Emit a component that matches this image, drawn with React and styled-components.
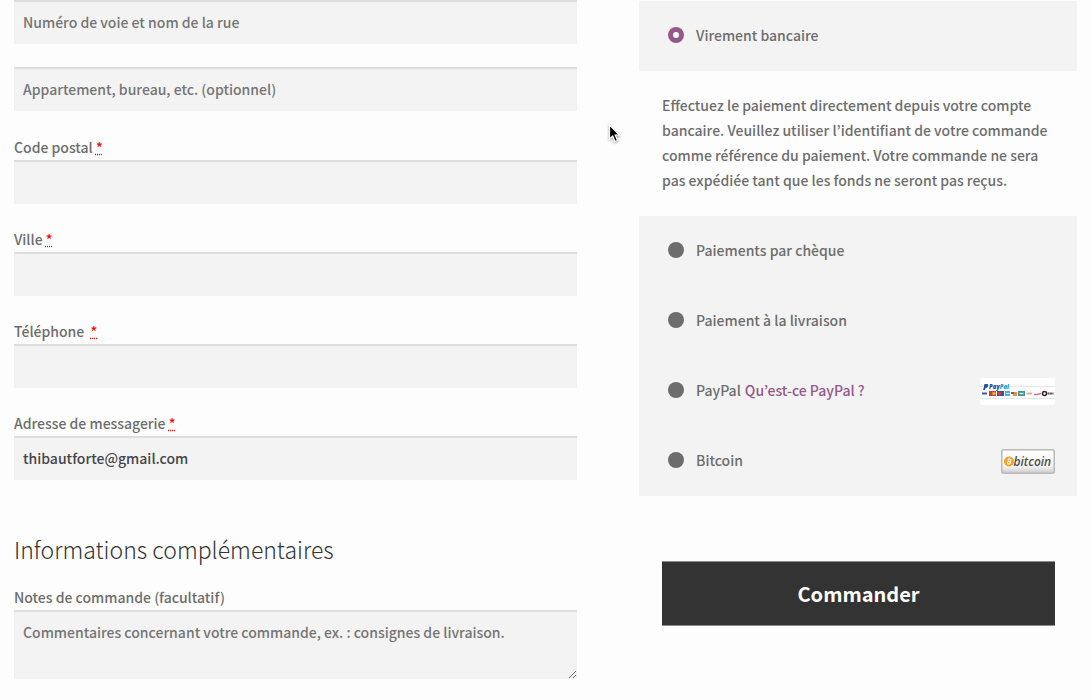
import React, { useState } from 'react';
import styled, { createGlobalStyle } from 'styled-components';

const GlobalStyle = createGlobalStyle`
  *, *::before, *::after {
    box-sizing: border-box;
  }

  body {
    margin: 0;
    background: #fdfdfd;
    color: #6d6d6d;
    font-family: 'Noto Sans CJK KR', 'Open Sans', sans-serif;
    font-size: 14px;
    font-weight: 500;
    line-height: 25px;
  }
`;

const Checkout = styled.form`
  display: grid;
  grid-template-columns: 9fr 7fr;
  column-gap: 62px;
  align-items: start;
  padding: 0 14px;
`;

const Column = styled.div`
  min-width: 0;
`;

const AddressLines = styled.div`
  display: grid;
  row-gap: 23px;
  margin-bottom: 24px;
`;

const Field = styled.p`
  margin: 0 0 23px;
`;

const Label = styled.label`
  display: block;
  white-space: pre-wrap;
`;

const Required = styled.abbr`
  color: #f00;
  text-decoration: underline dotted;
`;

const Input = styled.input`
  display: block;
  width: 100%;
  height: 44px;
  padding: 0 9px;
  border: 0;
  border-radius: 0;
  outline: 0;
  background: #f3f3f3;
  box-shadow: inset 0 2px 1px rgba(0, 0, 0, 0.09);
  color: #43454b;
  font: inherit;

  &::placeholder {
    color: #757575;
  }
`;

const Notes = styled(Input)`
  height: 69px;
  padding: 10px 9px;
  resize: vertical;
`;

const Heading = styled.h3`
  margin: 53px 0 20px;
  color: #333;
  font-size: 23px;
  font-weight: 300;
  line-height: 32px;
`;

const Methods = styled.ul`
  margin: 1px 0 0;
  padding: 0;
  list-style: none;
`;

const MethodRow = styled.div`
  display: flex;
  align-items: center;
  height: 70px;
  padding: 0 22px 2px 29px;
  background: #f3f3f3;
`;

const Radio = styled.input`
  appearance: none;
  flex: none;
  width: 16px;
  height: 16px;
  margin: 0 12px 0 0;
  border-radius: 50%;
  background: #6d6d6d;

  &:checked {
    border: 5px solid #96588a;
    background: #fdfdfd;
  }
`;

const MethodName = styled.label`
  margin-right: 4px;
`;

const HelpLink = styled.a`
  color: #96588a;
  text-decoration: none;
`;

const Logo = styled.span`
  display: flex;
  margin: 2px 0 0 auto;
`;

const Description = styled.p`
  margin: 0;
  padding: 22px 23px 23px;
`;

const Order = styled.button`
  display: block;
  width: calc(100% - 45px);
  height: 65px;
  margin: 65px 22px 0 23px;
  padding: 0;
  border: 0;
  border-top: 1px solid #8a8a8a;
  border-bottom: 1px solid #8a8a8a;
  background: #333;
  color: #fff;
  font: inherit;
  font-size: 20px;
  font-weight: 700;
`;

const Pointer = styled.svg`
  position: fixed;
  top: 123px;
  left: 606px;
  pointer-events: none;
`;

function PayPalLogo() {
  return (
    <svg width="75" height="27" viewBox="0 0 75 27" role="img" aria-label="PayPal">
      <rect width="75" height="27" rx="3" fill="#fff" />
      <path d="M0 8.5H3M24 8.5H75M0 20.5H75" stroke="#e6e6e6" />
      <path d="M4.5 6H7.5Q9 6.5 8 8.5Q7 10 5.5 10L5 12H3.2Z" fill="#1f4f96" />
      <text x="9" y="11" fontFamily="Open Sans" fontSize="6" fontWeight="800" fontStyle="italic" fill="#1f4796">
        Pay<tspan fill="#269bd7">Pal</tspan>
      </text>
      <path d="M2 14H7V17H2Z" fill="#dfe6f3" />
      <path d="M2 15.5H7" stroke="#35569b" strokeWidth="1.8" />
      <path d="M9 13H16V18H9Z" fill="#c5452c" />
      <circle cx="14" cy="15.5" r="1.8" fill="#eca63b" />
      <path d="M17 13H24V18H17Z" fill="#24599c" />
      <circle cx="19.5" cy="15.5" r="1.8" fill="#dd3844" />
      <path d="M25 13H30V18H25Z" fill="#4aaddd" />
      <path d="M26 15.5H29.5" stroke="#d4effb" />
      <path d="M31 15H34" stroke="#555" strokeWidth="1.8" />
      <path d="M34 15H37M33 17H37" stroke="#ef8b45" strokeWidth="1.8" />
      <path d="M38 13H45V18H38Z" fill="#41939c" />
      <path d="M39.5 15.5H43.5" stroke="#d3eecb" strokeWidth="1.5" />
      <path d="M46.5 15.5H52" stroke="#f1a189" strokeWidth="1.8" />
      <path d="M54 16.5H57L61 15.5" fill="none" stroke="#cf718e" strokeWidth="1.4" />
      <circle cx="64.5" cy="15.5" r="2" fill="#fff" stroke="#292929" strokeWidth="1.5" />
      <path d="M67.5 15.5H73.5" stroke="#555" strokeWidth="1.8" strokeDasharray="2 0.4" />
    </svg>
  );
}

function BitcoinLogo() {
  return (
    <svg width="54" height="25" viewBox="0 0 54 25" role="img" aria-label="Bitcoin">
      <defs>
        <linearGradient id="badge" x2="0" y2="1">
          <stop offset="0" stopColor="#fff" />
          <stop offset="0.7" stopColor="#f4f4f4" />
          <stop offset="1" stopColor="#c9c9c9" />
        </linearGradient>
      </defs>
      <rect x="0.75" y="0.75" width="52.5" height="23.5" rx="2" fill="url(#badge)" stroke="#b9b9b9" strokeWidth="1.5" />
      <circle cx="8" cy="12.5" r="5" fill="#f8a11b" />
      <path
        d="M7 9.8V15.2M7 10H8.3Q9.8 10 9.6 11.2Q9.5 12.4 8 12.4H7H8.3Q9.9 12.5 9.7 13.8Q9.5 15 8 15H7"
        transform="rotate(12 8 12.5)"
        fill="none"
        stroke="#fff"
        strokeWidth="1"
      />
      <text x="12.5" y="17" fontFamily="Open Sans" fontSize="12" fontWeight="600" fontStyle="italic" fill="#4d4d4d">bitcoin</text>
    </svg>
  );
}

const fields = [
  { id: 'postcode', label: 'Code postal ', type: 'text' },
  { id: 'city', label: 'Ville ', type: 'text' },
  { id: 'phone', label: 'Téléphone  ', type: 'tel' },
  { id: 'email', label: 'Adresse de messagerie ', type: 'email', value: 'thibautforte@gmail.com' },
];

const methods = [
  {
    id: 'bacs',
    name: 'Virement bancaire',
    description:
      'Effectuez le paiement directement depuis votre compte bancaire. Veuillez utiliser l’identifiant de votre commande comme référence du paiement. Votre commande ne sera pas expédiée tant que les fonds ne seront pas reçus.',
  },
  { id: 'cheque', name: 'Paiements par chèque' },
  { id: 'cod', name: 'Paiement à la livraison' },
  { id: 'paypal', name: 'PayPal', help: 'Qu’est-ce PayPal ?', logo: <PayPalLogo /> },
  { id: 'bitcoin', name: 'Bitcoin', logo: <BitcoinLogo /> },
];

export default function App() {
  const [selected, setSelected] = useState('bacs');

  return (
    <>
      <GlobalStyle />
      <Checkout onSubmit={e => e.preventDefault()}>
        <Column>
          <AddressLines>
            <Input aria-label="Adresse" placeholder="Numéro de voie et nom de la rue" />
            <Input aria-label="Complément d’adresse" placeholder="Appartement, bureau, etc. (optionnel)" />
          </AddressLines>
          {fields.map(field => (
            <Field key={field.id}>
              <Label htmlFor={field.id}>
                {field.label}
                <Required>*</Required>
              </Label>
              <Input id={field.id} type={field.type} defaultValue={field.value} />
            </Field>
          ))}
          <Heading>Informations complémentaires</Heading>
          <Label htmlFor="notes">Notes de commande (facultatif)</Label>
          <Notes
            as="textarea"
            id="notes"
            placeholder="Commentaires concernant votre commande, ex. : consignes de livraison."
          />
        </Column>
        <Column>
          <Methods>
            {methods.map(method => (
              <li key={method.id}>
                <MethodRow>
                  <Radio
                    type="radio"
                    name="payment"
                    id={method.id}
                    checked={selected === method.id}
                    onChange={() => setSelected(method.id)}
                  />
                  <MethodName htmlFor={method.id}>{method.name}</MethodName>
                  {method.help && <HelpLink href="#paypal">{method.help}</HelpLink>}
                  {method.logo && <Logo>{method.logo}</Logo>}
                </MethodRow>
                {method.description && selected === method.id && (
                  <Description>{method.description}</Description>
                )}
              </li>
            ))}
          </Methods>
          <Order type="submit">Commander</Order>
        </Column>
      </Checkout>
      <Pointer width="18" height="22" viewBox="0 0 18 22" aria-hidden="true">
        <path
          d="M3.5 2V16L6.7 13L9 18.5L11.5 17.5L9.2 12.2H13.5Z"
          fill="#000"
          stroke="#fff"
          strokeWidth="1.2"
          filter="drop-shadow(0 1px 1px rgba(0, 0, 0, 0.4))"
        />
      </Pointer>
    </>
  );
}
